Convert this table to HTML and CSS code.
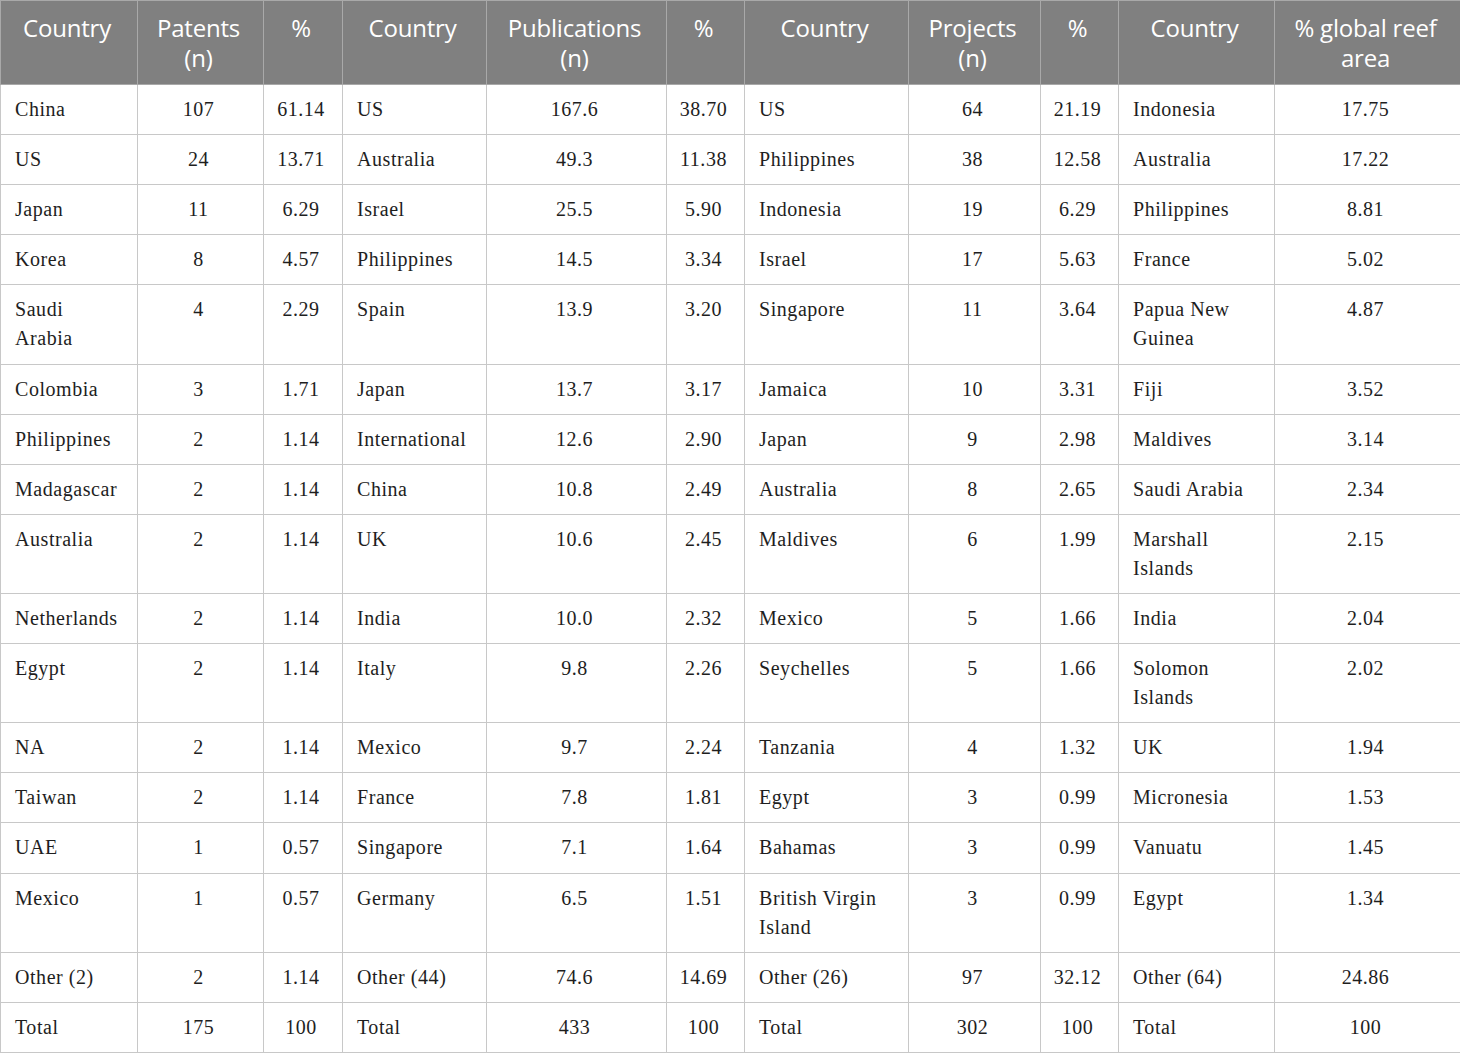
FILE: index.html
```html
<!DOCTYPE html>
<html>
<head>
<meta charset="utf-8">
<link rel="stylesheet" href="styles.css">
</head>
<body>
<table class="data">
<colgroup>
<col class="c1"><col class="c2"><col class="c3">
<col class="c4"><col class="c5"><col class="c6">
<col class="c7"><col class="c8"><col class="c9">
<col class="c10"><col class="c11">
</colgroup>
<thead>
<tr>
<th>Country</th><th>Patents<br>(n)</th><th>%</th>
<th>Country</th><th>Publications<br>(n)</th><th>%</th>
<th>Country</th><th>Projects<br>(n)</th><th>%</th>
<th>Country</th><th>% global reef<br>area</th>
</tr>
</thead>
<tbody>
<tr><td>China</td><td>107</td><td>61.14</td><td>US</td><td>167.6</td><td>38.70</td><td>US</td><td>64</td><td>21.19</td><td>Indonesia</td><td>17.75</td></tr>
<tr><td>US</td><td>24</td><td>13.71</td><td>Australia</td><td>49.3</td><td>11.38</td><td>Philippines</td><td>38</td><td>12.58</td><td>Australia</td><td>17.22</td></tr>
<tr><td>Japan</td><td>11</td><td>6.29</td><td>Israel</td><td>25.5</td><td>5.90</td><td>Indonesia</td><td>19</td><td>6.29</td><td>Philippines</td><td>8.81</td></tr>
<tr><td>Korea</td><td>8</td><td>4.57</td><td>Philippines</td><td>14.5</td><td>3.34</td><td>Israel</td><td>17</td><td>5.63</td><td>France</td><td>5.02</td></tr>
<tr><td>Saudi<br>Arabia</td><td>4</td><td>2.29</td><td>Spain</td><td>13.9</td><td>3.20</td><td>Singapore</td><td>11</td><td>3.64</td><td>Papua New<br>Guinea</td><td>4.87</td></tr>
<tr><td>Colombia</td><td>3</td><td>1.71</td><td>Japan</td><td>13.7</td><td>3.17</td><td>Jamaica</td><td>10</td><td>3.31</td><td>Fiji</td><td>3.52</td></tr>
<tr><td>Philippines</td><td>2</td><td>1.14</td><td>International</td><td>12.6</td><td>2.90</td><td>Japan</td><td>9</td><td>2.98</td><td>Maldives</td><td>3.14</td></tr>
<tr><td>Madagascar</td><td>2</td><td>1.14</td><td>China</td><td>10.8</td><td>2.49</td><td>Australia</td><td>8</td><td>2.65</td><td>Saudi Arabia</td><td>2.34</td></tr>
<tr><td>Australia</td><td>2</td><td>1.14</td><td>UK</td><td>10.6</td><td>2.45</td><td>Maldives</td><td>6</td><td>1.99</td><td>Marshall<br>Islands</td><td>2.15</td></tr>
<tr><td>Netherlands</td><td>2</td><td>1.14</td><td>India</td><td>10.0</td><td>2.32</td><td>Mexico</td><td>5</td><td>1.66</td><td>India</td><td>2.04</td></tr>
<tr><td>Egypt</td><td>2</td><td>1.14</td><td>Italy</td><td>9.8</td><td>2.26</td><td>Seychelles</td><td>5</td><td>1.66</td><td>Solomon<br>Islands</td><td>2.02</td></tr>
<tr><td>NA</td><td>2</td><td>1.14</td><td>Mexico</td><td>9.7</td><td>2.24</td><td>Tanzania</td><td>4</td><td>1.32</td><td>UK</td><td>1.94</td></tr>
<tr><td>Taiwan</td><td>2</td><td>1.14</td><td>France</td><td>7.8</td><td>1.81</td><td>Egypt</td><td>3</td><td>0.99</td><td>Micronesia</td><td>1.53</td></tr>
<tr><td>UAE</td><td>1</td><td>0.57</td><td>Singapore</td><td>7.1</td><td>1.64</td><td>Bahamas</td><td>3</td><td>0.99</td><td>Vanuatu</td><td>1.45</td></tr>
<tr><td>Mexico</td><td>1</td><td>0.57</td><td>Germany</td><td>6.5</td><td>1.51</td><td>British Virgin<br>Island</td><td>3</td><td>0.99</td><td>Egypt</td><td>1.34</td></tr>
<tr><td>Other (2)</td><td>2</td><td>1.14</td><td>Other (44)</td><td>74.6</td><td>14.69</td><td>Other (26)</td><td>97</td><td>32.12</td><td>Other (64)</td><td>24.86</td></tr>
<tr><td>Total</td><td>175</td><td>100</td><td>Total</td><td>433</td><td>100</td><td>Total</td><td>302</td><td>100</td><td>Total</td><td>100</td></tr>
</tbody>
</table>
</body>
</html>
```
FILE: styles.css
```css
html, body {
  margin: 0;
  padding: 0;
  background: #ffffff;
}

.data {
  border-collapse: collapse;
  table-layout: fixed;
  width: 1460px;
}

.c1 { width: 137px; }
.c2 { width: 126px; }
.c3 { width: 79px; }
.c4 { width: 144px; }
.c5 { width: 180px; }
.c6 { width: 78px; }
.c7 { width: 164px; }
.c8 { width: 132px; }
.c9 { width: 78px; }
.c10 { width: 156px; }
.c11 { width: 186px; }

.data th {
  background: #808080;
  color: #ffffff;
  font-family: "Open Sans", "Liberation Sans", sans-serif;
  font-weight: 400;
  font-size: 24px;
  line-height: 29.5px;
  padding: 12px 8px 12px 4px;
  text-align: center;
  border: 1px solid #a9a9a9;
  vertical-align: top;
  letter-spacing: -0.2px;
}

.data td {
  font-family: "Liberation Serif", "Times New Roman", serif;
  font-size: 20px;
  letter-spacing: 0.55px;
  line-height: 29px;
  color: #1e1e1e;
  padding: 10px 8px 10.12px 15px;
  border: 1px solid #c8c8c8;
  vertical-align: top;
  text-align: center;
}

.data td:nth-child(1),
.data td:nth-child(4),
.data td:nth-child(7),
.data td:nth-child(10) {
  text-align: left;
  padding-left: 14px;
}

.data td:nth-child(2),
.data td:nth-child(3),
.data td:nth-child(5),
.data td:nth-child(6),
.data td:nth-child(8),
.data td:nth-child(9),
.data td:nth-child(11) {
  padding-left: 6px;
  padding-right: 10px;
}
```
